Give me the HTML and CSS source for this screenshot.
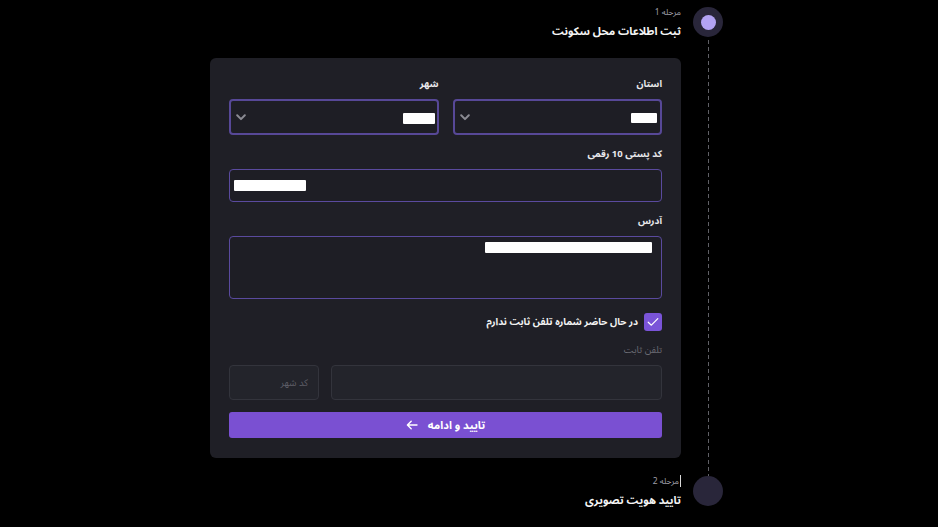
FILE: index.html
```html
<!DOCTYPE html>
<html lang="fa" dir="rtl">
<head>
<meta charset="utf-8">
<title>ثبت اطلاعات محل سکونت</title>
<link rel="stylesheet" href="styles.css">
</head>
<body>
<div class="page">
  <div class="stepper">
    <div class="step step-active">
      <div class="marker">
        <div class="dot dot-active"><span class="dot-inner"></span></div>
        <div class="rail"></div>
      </div>
      <div class="step-body">
        <div class="step-head">
          <div class="step-num">مرحله 1</div>
          <div class="step-title">ثبت اطلاعات محل سکونت</div>
        </div>
        <div class="card">
          <div class="row2">
            <div class="field">
              <div class="label">استان</div>
              <div class="select">
                <span class="redact redact-prov"></span>
                <svg class="chev" width="10" height="7" viewBox="0 0 10 7"><path d="M1.2 1.3 L5 5.1 L8.8 1.3" fill="none" stroke="#8b8b93" stroke-width="2" stroke-linecap="round" stroke-linejoin="round"/></svg>
              </div>
            </div>
            <div class="field">
              <div class="label">شهر</div>
              <div class="select">
                <span class="redact redact-city"></span>
                <svg class="chev" width="10" height="7" viewBox="0 0 10 7"><path d="M1.2 1.3 L5 5.1 L8.8 1.3" fill="none" stroke="#8b8b93" stroke-width="2" stroke-linecap="round" stroke-linejoin="round"/></svg>
              </div>
            </div>
          </div>

          <div class="field field-gap">
            <div class="label">کد پستی 10 رقمی</div>
            <div class="input input-postal">
              <span class="redact redact-postal"></span>
            </div>
          </div>

          <div class="field field-gap">
            <div class="label">آدرس</div>
            <div class="input textarea">
              <span class="redact redact-addr"></span>
            </div>
          </div>

          <div class="check-row">
            <span class="checkbox">
              <svg width="12" height="10" viewBox="0 0 12 10"><path d="M1.2 5.2 L4.4 8.2 L10.8 1.6" fill="none" stroke="#ffffff" stroke-width="1.2" stroke-linecap="round" stroke-linejoin="round"/></svg>
            </span>
            <span class="check-label">در حال حاضر شماره تلفن ثابت ندارم</span>
          </div>

          <div class="label label-muted">تلفن ثابت</div>
          <div class="phone-row">
            <div class="input disabled phone-num"></div>
            <div class="input disabled phone-code"><span class="placeholder">کد شهر</span></div>
          </div>

          <button class="btn" type="button">
            <span>تایید و ادامه</span>
            <svg width="12" height="10" viewBox="0 0 12 10"><path d="M11 5 H1.5 M5.2 1.2 L1.4 5 L5.2 8.8" fill="none" stroke="#ffffff" stroke-width="1.4" stroke-linecap="round" stroke-linejoin="round"/></svg>
          </button>
        </div>
      </div>
    </div>

    <div class="step">
      <div class="marker">
        <div class="dot"></div>
      </div>
      <div class="step-body">
        <div class="step-head">
          <div class="step-num step-num-caret">مرحله 2</div>
          <div class="step-title">تایید هویت تصویری</div>
        </div>
      </div>
    </div>
  </div>
</div>
</body>
</html>
```
FILE: styles.css
```css
* { box-sizing: border-box; }

html, body {
  margin: 0;
  padding: 0;
  background: #000000;
}

body {
  direction: rtl;
  font-family: "Noto Sans Arabic", "DejaVu Sans", "Noto Sans", sans-serif;
  color: #eeeeee;
}

.page {
  display: flex;
  justify-content: center;
  padding: 7px 5px 0 0;
}

.stepper {
  width: 513px;
}

.step {
  display: flex;
  gap: 12px;
}

.marker {
  width: 30px;
  flex: none;
  display: flex;
  flex-direction: column;
  align-items: center;
}

.dot {
  width: 30px;
  height: 30px;
  border-radius: 50%;
  background: #29263a;
  flex: none;
}

.dot-active {
  display: flex;
  align-items: center;
  justify-content: center;
}

.dot-inner {
  width: 15px;
  height: 15px;
  border-radius: 50%;
  background: #b3a3f4;
}

.rail {
  flex: 1;
  width: 1px;
  margin-top: 3px;
  background: repeating-linear-gradient(to bottom, #606066 0 4px, transparent 4px 7px);
}

.step-body {
  width: 471px;
}

.step-active .step-body {
  padding-bottom: 18px;
}

.step-head {
  margin-top: -1px;
  display: flex;
  flex-direction: column;
  align-items: flex-start;
}

.step-num {
  font-size: 8.5px;
  line-height: 12px;
  height: 12px;
  color: #9d9da6;
}

.step-num-caret {
  border-right: 1px solid #d8d8d8;
  padding-right: 1px;
}

.step-title {
  margin-top: 5px;
  font-size: 11px;
  line-height: 18px;
  height: 18px;
  font-weight: bold;
  color: #f4f4f4;
}

.card {
  margin-top: 17px;
  background: #1f1f26;
  border-radius: 6px;
  padding: 18px 19px 20px;
}

.row2 {
  display: grid;
  grid-template-columns: 1fr 1fr;
  gap: 14px;
}

.field-gap {
  margin-top: 11px;
}

.label {
  font-size: 9.5px;
  line-height: 16px;
  height: 16px;
  font-weight: bold;
  color: #e9e9ec;
  margin-bottom: 7px;
}

.label-muted {
  margin-top: 11px;
  font-weight: normal;
  color: #6b6b74;
}

.select {
  height: 36px;
  border: 2px solid #574897;
  border-radius: 4px;
  background: #1e1e25;
  display: flex;
  align-items: center;
  justify-content: space-between;
  padding: 0 3px 0 5px;
}

.chev {
  display: block;
}

.input {
  border: 1px solid #5a4a9e;
  border-radius: 4px;
  background: #1e1e25;
  display: flex;
}

.input-postal {
  height: 33px;
  align-items: center;
  justify-content: flex-end;
  padding: 0 4px;
}

.textarea {
  height: 63px;
  padding: 3px 9px;
  align-items: flex-start;
}

.redact {
  display: block;
  background: #ffffff;
  border-radius: 1px;
}

.redact-prov { width: 26px; height: 10px; margin-top: 2px; }
.redact-city { width: 32px; height: 11px; margin-top: 2px; margin-right: -1px; }
.redact-postal { width: 72px; height: 11px; }
.redact-addr { width: 167px; height: 11px; margin-top: 2px; }

.check-row {
  margin-top: 14px;
  display: flex;
  align-items: center;
  gap: 6px;
  height: 18px;
}

.checkbox {
  width: 18px;
  height: 18px;
  border-radius: 3px;
  background: #7a54d8;
  display: flex;
  align-items: center;
  justify-content: center;
  flex: none;
}

.check-label {
  font-size: 9.75px;
  font-weight: bold;
  color: #f2f2f2;
  line-height: 16px;
}

.phone-row {
  display: flex;
  gap: 12px;
  height: 35px;
}

.disabled {
  background: #23242b;
  border-color: #33343c;
}

.phone-num {
  flex: 1;
}

.phone-code {
  width: 90px;
  flex: none;
  align-items: center;
  padding-right: 10px;
}

.placeholder {
  font-size: 9.5px;
  color: #5d5d66;
}

.btn {
  margin-top: 12px;
  width: 100%;
  height: 26px;
  border: none;
  border-radius: 3px;
  background: #7a50d2;
  color: #ffffff;
  font-family: inherit;
  font-size: 11px;
  font-weight: bold;
  display: flex;
  align-items: center;
  justify-content: center;
  gap: 10px;
  padding: 0;
  direction: rtl;
}

.btn svg {
  display: block;
}
```
